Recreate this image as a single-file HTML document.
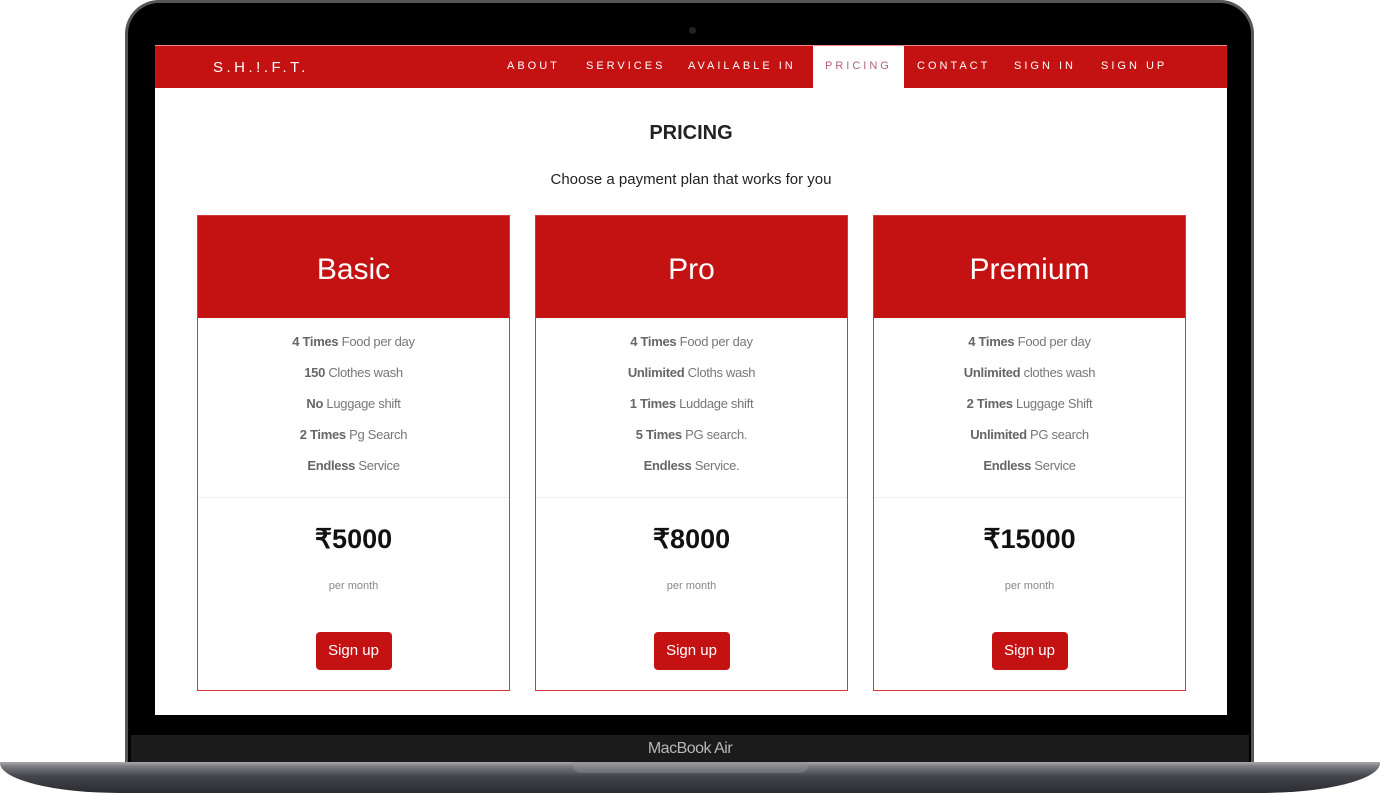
<!DOCTYPE html>
<html><head><style>
*{margin:0;padding:0;box-sizing:border-box}
body{width:1380px;height:793px;background:#fff;position:relative;overflow:hidden;font-family:"Liberation Sans",sans-serif}
.lid{position:absolute;left:125px;top:0;width:1129px;height:770px;background:#000;border-radius:34px 34px 0 0;border:3px solid #55565a;border-bottom:none}
.chin{position:absolute;left:131px;top:735px;width:1118px;height:30px;background:#1b1b1c}
.chin span{position:absolute;left:0;right:0;top:5px;text-align:center;color:#b8b8b8;font-size:16px;letter-spacing:-0.5px}
.base{position:absolute;left:0;top:762px;width:1380px;height:31px;background:linear-gradient(#a9aab0 0,#7d7e84 4px,#45464c 14px,#2a2b30 31px);border-radius:0 0 120px 120px/0 0 30px 30px}
.notch{position:absolute;left:573px;top:762px;width:235px;height:11px;background:linear-gradient(#9a9ba0,#6d6e73);border-radius:0 0 8px 8px}
.screen{position:absolute;left:155px;top:45px;width:1072px;height:670px;background:#fff}
.nav{height:43px;background:#c41212;position:relative;border-top:1px solid #e88}
.logo{position:absolute;left:58px;top:13px;color:#fff;font-size:15px;letter-spacing:3.5px}
.nav a{position:absolute;top:0;height:43px;line-height:41px;color:#fff;font-size:11px;letter-spacing:3px;text-decoration:none}
.nav a.act{background:#fff;color:#b06080;padding:0 12px}
h2{position:absolute;top:77px;width:100%;text-align:center;font-size:20px;font-weight:bold;color:#222}
.sub{position:absolute;top:126px;width:100%;text-align:center;font-size:15px;color:#222}
.card{position:absolute;top:170px;width:313px;height:476px;border:1px solid #d9363e}
.hd{height:102px;background:#c41212;color:#fff;font-size:30px;text-align:center;line-height:108px}
.ft{height:180px;border-bottom:1px solid #eee;text-align:center;padding-top:16px;color:#777;font-size:13px;letter-spacing:-0.3px}
.ft p{height:31px}
.ft b{color:#666}
.pr{text-align:center;font-size:27px;font-weight:bold;color:#111;margin-top:26px}
.pm{text-align:center;font-size:11px;color:#888;margin-top:25px}
.btn{display:block;margin:40px auto 0;width:76px;height:38px;background:#c41212;color:#fff;border-radius:4px;font-size:15px;text-align:center;line-height:38px}
</style></head><body>
<div class="lid"><div style="position:absolute;left:561px;top:24px;width:7px;height:7px;border-radius:50%;background:#222"></div></div>
<div class="chin"><span>MacBook Air</span></div>
<div class="base"></div><div class="notch"></div>
<div class="screen">
<div class="nav"><div class="logo">S.H.!.F.T.</div>
<a style="left:352px">ABOUT</a><a style="left:431px">SERVICES</a><a style="left:533px">AVAILABLE IN</a><a class="act" style="left:658px">PRICING</a><a style="left:762px">CONTACT</a><a style="left:859px">SIGN IN</a><a style="left:946px">SIGN UP</a></div>
<h2>PRICING</h2>
<div class="sub">Choose a payment plan that works for you</div>
<div class="card" style="left:42px"><div class="hd">Basic</div><div class="ft"><p><b>4 Times</b> Food per day</p><p><b>150</b> Clothes wash</p><p><b>No</b> Luggage shift</p><p><b>2 Times</b> Pg Search</p><p><b>Endless</b> Service</p></div><div class="pr">₹5000</div><div class="pm">per month</div><span class="btn">Sign up</span></div>
<div class="card" style="left:380px"><div class="hd">Pro</div><div class="ft"><p><b>4 Times</b> Food per day</p><p><b>Unlimited</b> Cloths wash</p><p><b>1 Times</b> Luddage shift</p><p><b>5 Times</b> PG search.</p><p><b>Endless</b> Service.</p></div><div class="pr">₹8000</div><div class="pm">per month</div><span class="btn">Sign up</span></div>
<div class="card" style="left:718px"><div class="hd">Premium</div><div class="ft"><p><b>4 Times</b> Food per day</p><p><b>Unlimited</b> clothes wash</p><p><b>2 Times</b> Luggage Shift</p><p><b>Unlimited</b> PG search</p><p><b>Endless</b> Service</p></div><div class="pr">₹15000</div><div class="pm">per month</div><span class="btn">Sign up</span></div>
</div>
</body></html>
